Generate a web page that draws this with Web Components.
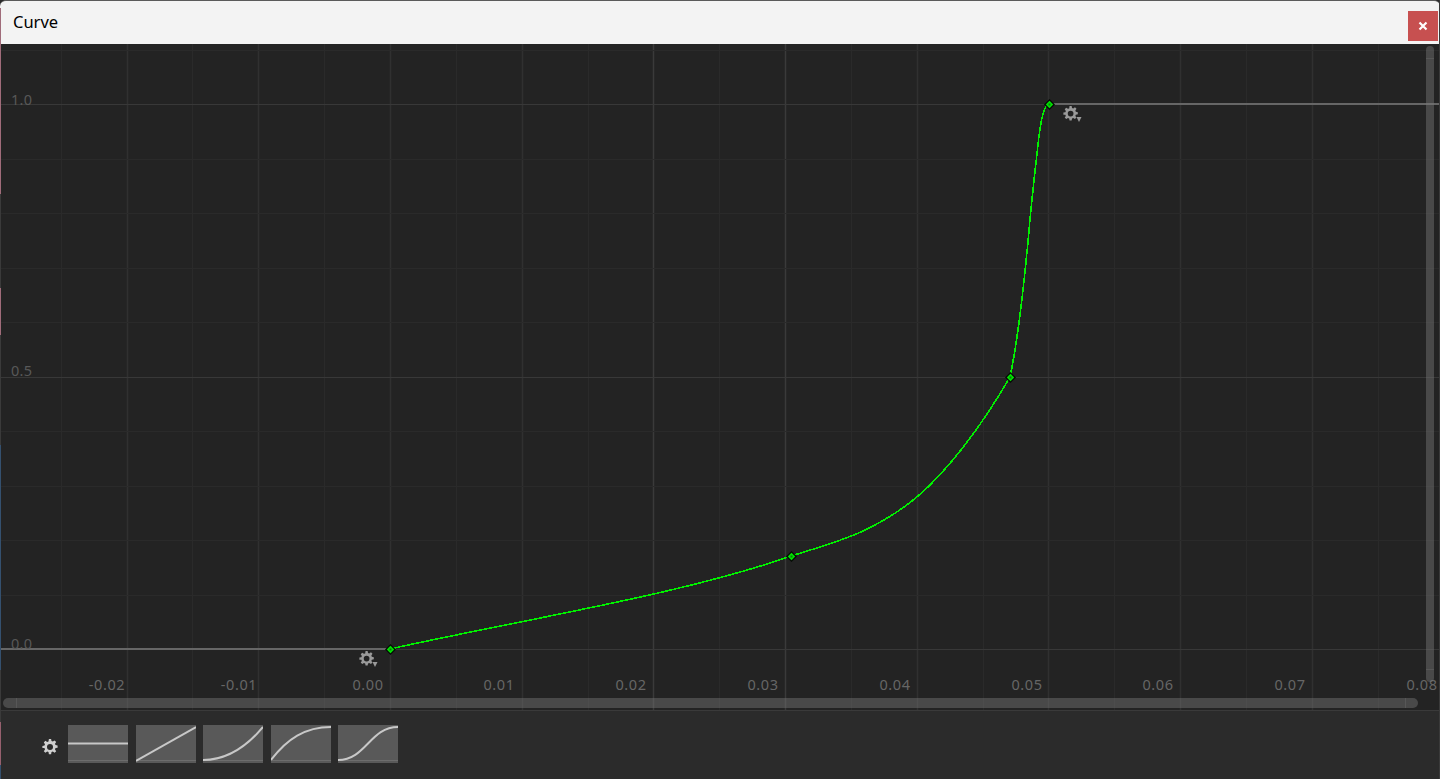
<!DOCTYPE html>
<html>
<head>
<meta charset="utf-8">
<title>Curve</title>
<style>
  html, body { margin: 0; height: 100%; background: #2b2b2b; overflow: hidden; }
</style>
</head>
<body>
<curve-window title-text="Curve"></curve-window>
<script>
// ikonka zebatki
const GEAR = 'M6.9 0h2.2l.4 2.1 1.3.5 1.8-1.2 1.6 1.6-1.2 1.8.5 1.3 2.1.4v2.2l-2.1.4-.5 1.3 1.2 1.8-1.6 1.6-1.8-1.2-1.3.5-.4 2.1H6.9l-.4-2.1-1.3-.5-1.8 1.2-1.6-1.6 1.2-1.8-.5-1.3L.4 9.100V6.900l2.100-.4.5-1.300-1.200-1.800 1.600-1.600 1.800 1.200 1.300-.5zM8 5a3 3 0 1 0 0 6 3 3 0 0 0 0-6z';

class CurveTitlebar extends HTMLElement {
  constructor() {
    super();
    this.attachShadow({ mode: 'open' });
    this.shadowRoot.innerHTML = `
      <style>
        :host {
          display: flex;
          align-items: center;
          justify-content: space-between;
          height: 43px;
          flex: none;
          background: #f3f3f3;
          border-top: 1px solid #5a5a5a;
          border-top-left-radius: 6px;
          border-top-right-radius: 6px;
          padding: 0 2px 0 13px;
          font: 16.500px "Noto Sans", "Open Sans", sans-serif;
          color: #000;
        }
        span { margin-top: -2px; }
        .close {
          width: 30px;
          height: 30px;
          margin-top: 7px;
          background: #c75050;
          display: flex;
          align-items: center;
          justify-content: center;
        }
        .close svg { display: block; }
      </style>
      <span><slot></slot></span>
      <div class="close">
        <svg width="10" height="10" viewBox="0 0 10 10"><path d="M1.500 1.500l7 7M8.500 1.500l-7 7" stroke="#fff" stroke-width="2.200" fill="none"/></svg>
      </div>
    `;
  }
}
customElements.define('curve-titlebar', CurveTitlebar);

class CurveKey extends HTMLElement {
  constructor() {
    super();
    this.attachShadow({ mode: 'open' });
  }
  connectedCallback() {
    const x = this.getAttribute('x'), y = this.getAttribute('y');
    this.shadowRoot.innerHTML = `
      <style>
        :host { position: absolute; left: ${x - 5.5}px; top: ${y - 5.5}px; width: 11px; height: 11px; display: block; }
        svg { display: block; }
      </style>
      <svg width="11" height="11" viewBox="0 0 11 11">
        <path d="M5.500 0L11 5.500 5.500 11 0 5.500z" fill="#050a05"/>
        <path d="M5.500 1.800L9.200 5.500 5.500 9.200 1.800 5.500z" fill="#00e400"/>
        <rect x="4.500" y="4.500" width="2" height="2" fill="#0a7a0a"/>
      </svg>
    `;
  }
}
customElements.define('curve-key', CurveKey);

class CurveGear extends HTMLElement {
  constructor() {
    super();
    this.attachShadow({ mode: 'open' });
  }
  connectedCallback() {
    const x = this.getAttribute('x'), y = this.getAttribute('y');
    this.shadowRoot.innerHTML = `
      <style>
        :host { position: absolute; left: ${x}px; top: ${y}px; width: 22px; height: 20px; display: block; }
        svg { display: block; }
      </style>
      <svg width="22" height="20" viewBox="0 0 22 20">
        <path d="${GEAR}" transform="scale(.95)" fill="#9a9a9a" fill-rule="evenodd"/>
        <path d="M13.500 11h5l-2.500 5z" fill="#9a9a9a"/>
      </svg>
    `;
  }
}
customElements.define('curve-gear', CurveGear);

class CurveScrollbar extends HTMLElement {
  constructor() {
    super();
    this.attachShadow({ mode: 'open' });
    this.shadowRoot.innerHTML = `
      <style>
        :host {
          position: absolute;
          display: block;
          background: rgba(120, 120, 120, .45);
          border-radius: 5px;
        }
        :host([orient="h"]) { left: 3px; top: 654px; width: 1415px; height: 10px; }
        :host([orient="v"]) { left: 1426px; top: 2px; width: 8px; height: 636px; }
        .cap { position: absolute; background: rgba(255, 255, 255, .08); }
        :host([orient="h"]) .a { left: 13px; top: 0; width: 1px; height: 100%; }
        :host([orient="h"]) .b { right: 12px; top: 0; width: 1px; height: 100%; }
        :host([orient="v"]) .a { left: 0; top: 12px; width: 100%; height: 1px; }
        :host([orient="v"]) .b { left: 0; bottom: 12px; width: 100%; height: 1px; }
      </style>
      <div class="cap a"></div><div class="cap b"></div>
    `;
  }
}
customElements.define('curve-scrollbar', CurveScrollbar);

class CurveCanvas extends HTMLElement {
  constructor() {
    super();
    this.attachShadow({ mode: 'open' });
  }
  connectedCallback() {
    // y w svg liczone od gory okna, canvas zaczyna sie na 44
    let lines = '';
    for (let i = 0; i < 21; i++) {
      const x = Math.round(60.7 + 65.85 * i) + .5;
      let col = i % 2 ? '#303030' : '#2a2a2a';
      if (i == 9 || i == 11) col = '#3a3a3a';
      lines += `<path d="M${x} 44V710" stroke="${col}" stroke-width="${i % 2 ? 1.5 : 1}"/>`;
    }
    for (let i = 0; i < 12; i++) {
      const y = Math.round(49.5 + 54.5 * i) + .5;
      const major = i == 1 || i == 6 || i == 11;
      lines += `<path d="M0 ${y}H1440" stroke="${major ? '#383838' : '#2a2a2a'}"/>`;
    }

    const xHtml = ['-0.02', '-0.01'].map((t, i) => `<span class="lab x" style="left:${107 + 132 * i}px">${t}</span>`).join('')
      + ['0.00', '0.01', '0.02', '0.03', '0.04', '0.05', '0.06', '0.07', '0.08'].map((t, i) => `<span class="lab x" style="left:${Math.round(367.5 + 131.8 * i)}px">${t}</span>`).join('');
    const yHtml = [['1.0', 46], ['0.5', 317], ['0.0', 590]].map(l => `<span class="lab" style="left:11px;top:${l[1]}px">${l[0]}</span>`).join('');

    this.shadowRoot.innerHTML = `
      <style>
        :host {
          display: block;
          position: relative;
          flex: none;
          height: 666px;
          background: #232323;
          overflow: hidden;
          font: 14.500px "Noto Sans", "Open Sans", sans-serif;
        }
        svg.plot { position: absolute; left: 0; top: -44px; }
        .lab { position: absolute; color: #585858; white-space: nowrap; line-height: 19px; letter-spacing: .3px; }
        .lab.x { top: 631px; transform: translateX(-50%); color: #666; letter-spacing: .6px; }
      </style>
      <svg class="plot" width="1440" height="710" viewBox="0 0 1440 710" fill="none">
        ${lines}
        <path d="M0 649H390M1049 104H1440" stroke="#666" stroke-width="2"/>
        <path d="M390 649C520 620 680 595 791 556C820 547 845 540 865 530C890 518 910 505 930 485C960 455 985 420 1010 377C1020 330 1024 280 1028 242C1031 205 1034 180 1038 145C1040 125 1043 106 1049 104" stroke="#00f000" stroke-width="1.600" shape-rendering="crispEdges"/>
      </svg>
      ${xHtml}${yHtml}
      <curve-key x="390" y="605"></curve-key>
      <curve-key x="791" y="512"></curve-key>
      <curve-key x="1010" y="333"></curve-key>
      <curve-key x="1049" y="60"></curve-key>
      <curve-gear x="1063" y="62"></curve-gear>
      <curve-gear x="359" y="607"></curve-gear>
      <curve-scrollbar orient="h"></curve-scrollbar>
      <curve-scrollbar orient="v"></curve-scrollbar>
    `;
  }
}
customElements.define('curve-canvas', CurveCanvas);

class CurvePreset extends HTMLElement {
  constructor() {
    super();
    this.attachShadow({ mode: 'open' });
  }
  connectedCallback() {
    this.shadowRoot.innerHTML = `
      <style>
        :host { display: block; width: 60px; height: 38px; background: #595959; }
        svg { display: block; }
      </style>
      <svg width="60" height="38" viewBox="0 0 60 38" fill="none">
        <path d="M0 35.500H60" stroke="#6d6d6d"/>
        <path d="${this.getAttribute('d')}" stroke="#c8c8c8" stroke-width="2"/>
      </svg>
    `;
  }
}
customElements.define('curve-preset', CurvePreset);

class CurveToolbar extends HTMLElement {
  constructor() {
    super();
    this.attachShadow({ mode: 'open' });
    this.shadowRoot.innerHTML = `
      <style>
        :host {
          display: flex;
          flex: 1;
          align-items: flex-start;
          gap: 7.500px;
          background: #2b2b2b;
          border-top: 1px solid #3a3a3a;
          padding: 14px 0 0 68px;
          position: relative;
        }
        .gear { position: absolute; left: 42px; top: 28px; display: block; }
      </style>
      <svg class="gear" width="16" height="16" viewBox="0 0 16 16"><path d="${GEAR}" fill="#cfcfcf" fill-rule="evenodd"/></svg>
      <slot></slot>
    `;
  }
}
customElements.define('curve-toolbar', CurveToolbar);

class CurveWindow extends HTMLElement {
  constructor() {
    super();
    this.attachShadow({ mode: 'open' });
  }
  connectedCallback() {
    this.shadowRoot.innerHTML = `
      <style>
        :host {
          display: flex;
          flex-direction: column;
          position: relative;
          width: 1440px;
          height: 779px;
          overflow: hidden;
          box-sizing: border-box;
          background: #2b2b2b;
        }
        /* pulpit przeswitujacy przy lewej krawedzi */
        .edge {
          position: absolute;
          left: 0;
          top: 8px;
          bottom: 0;
          width: 1px;
          background: linear-gradient(to bottom,
            #a06c7a 0, #a06c7a 186px,
            #3a3a3a 186px, #3a3a3a 280px,
            #a06c7a 280px, #a06c7a 327px,
            #3a3a3a 327px, #3a3a3a 437px,
            #34506e 437px, #34506e 662px,
            #3a3a3a 662px, #3a3a3a 714px,
            #96606e 714px, #96606e 757px,
            #34506e 757px);
        }
        .rim { position: absolute; right: 0; top: 0; bottom: 0; width: 1px; background: #3a3a3a; }
      </style>
      <curve-titlebar>${this.getAttribute('title-text')}</curve-titlebar>
      <curve-canvas></curve-canvas>
      <curve-toolbar>
        <curve-preset d="M0 18.500H60"></curve-preset>
        <curve-preset d="M0 36L60 2"></curve-preset>
        <curve-preset d="M0 35C20 35 40 26 60 2"></curve-preset>
        <curve-preset d="M0 35C16 14 34 2 60 2"></curve-preset>
        <curve-preset d="M0 35C28 35 32 2 60 2"></curve-preset>
      </curve-toolbar>
      <div class="edge"></div>
      <div class="rim"></div>
    `;
  }
}
customElements.define('curve-window', CurveWindow);
</script>
</body>
</html>
